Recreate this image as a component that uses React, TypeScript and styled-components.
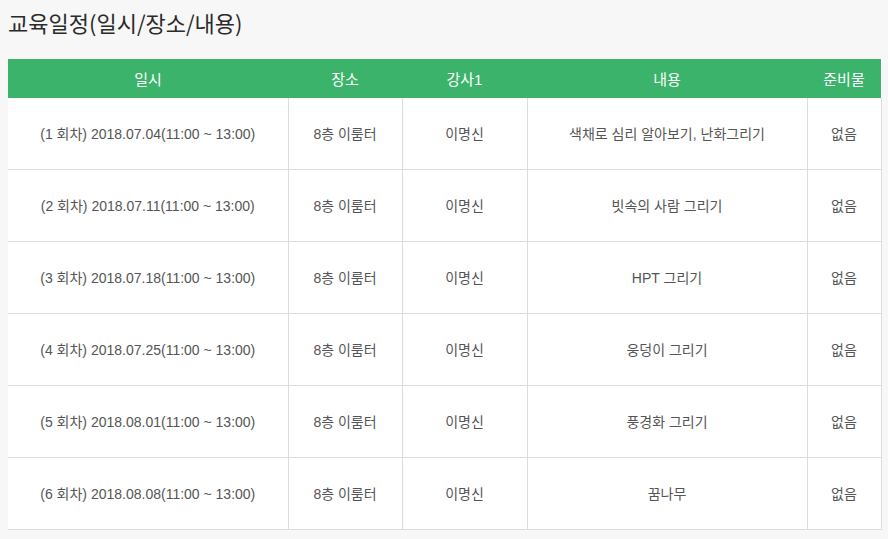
import styled, { createGlobalStyle } from "styled-components";

const GlobalStyle = createGlobalStyle`
  html, body {
    margin: 0;
    padding: 0;
    background: #f7f7f7;
  }
  body {
    font-family: "Noto Sans CJK KR", "Noto Sans", sans-serif;
  }
`;

type Row = {
  no: number;
  date: string;
  place: string;
  teacher: string;
  content: string;
  prep: string;
};

const ROWS: Row[] = [
  { no: 1, date: "2018.07.04", place: "8층 이룸터", teacher: "이명신", content: "색채로 심리 알아보기, 난화그리기", prep: "없음" },
  { no: 2, date: "2018.07.11", place: "8층 이룸터", teacher: "이명신", content: "빗속의 사람 그리기", prep: "없음" },
  { no: 3, date: "2018.07.18", place: "8층 이룸터", teacher: "이명신", content: "HPT 그리기", prep: "없음" },
  { no: 4, date: "2018.07.25", place: "8층 이룸터", teacher: "이명신", content: "웅덩이 그리기", prep: "없음" },
  { no: 5, date: "2018.08.01", place: "8층 이룸터", teacher: "이명신", content: "풍경화 그리기", prep: "없음" },
  { no: 6, date: "2018.08.08", place: "8층 이룸터", teacher: "이명신", content: "꿈나무", prep: "없음" },
];

export default function App() {
  return (
    <>
      <GlobalStyle />
      <Page>
        <Title>교육일정(일시/장소/내용)</Title>
        <Table>
          <colgroup>
            <col style={{ width: 280 }} />
            <col style={{ width: 114 }} />
            <col style={{ width: 125 }} />
            <col style={{ width: 280 }} />
            <col style={{ width: 74 }} />
          </colgroup>
          <thead>
            <tr>
              <Th>일시</Th>
              <Th>장소</Th>
              <Th>강사1</Th>
              <Th>내용</Th>
              <Th>준비물</Th>
            </tr>
          </thead>
          <tbody>
            {ROWS.map((r) => (
              <tr key={r.no}>
                <Td>
                  ({r.no} 회차) {r.date}(11:00 ~ 13:00)
                </Td>
                <Td>{r.place}</Td>
                <Td>{r.teacher}</Td>
                <Td>{r.content}</Td>
                <Td>{r.prep}</Td>
              </tr>
            ))}
          </tbody>
        </Table>
      </Page>
    </>
  );
}

const Page = styled.div`
  padding: 0 7px 0 8px;
`;

const Title = styled.h2`
  margin: 0;
  padding-top: 7px;
  height: 52px;
  font-size: 22px;
  font-weight: 400;
  line-height: 30px;
  color: #2b2b2b;
`;

const Table = styled.table`
  width: 873px;
  table-layout: fixed;
  border-collapse: collapse;
  background: #fff;
`;

const Th = styled.th`
  height: 39px;
  padding: 0;
  background: #3bb36b;
  color: #fff;
  font-family: "Liberation Sans", "Noto Sans CJK KR", sans-serif;
  font-size: 15px;
  font-weight: 400;
  text-align: center;
`;

const Td = styled.td`
  height: 71px;
  padding: 0;
  border: 1px solid #dcdcdc;
  border-top: none;
  color: #555;
  font-family: "Liberation Sans", "Noto Sans CJK KR", sans-serif;
  font-size: 14px;
  line-height: 18px;
  text-align: center;

  &:first-child {
    border-left: none;
  }
`;
